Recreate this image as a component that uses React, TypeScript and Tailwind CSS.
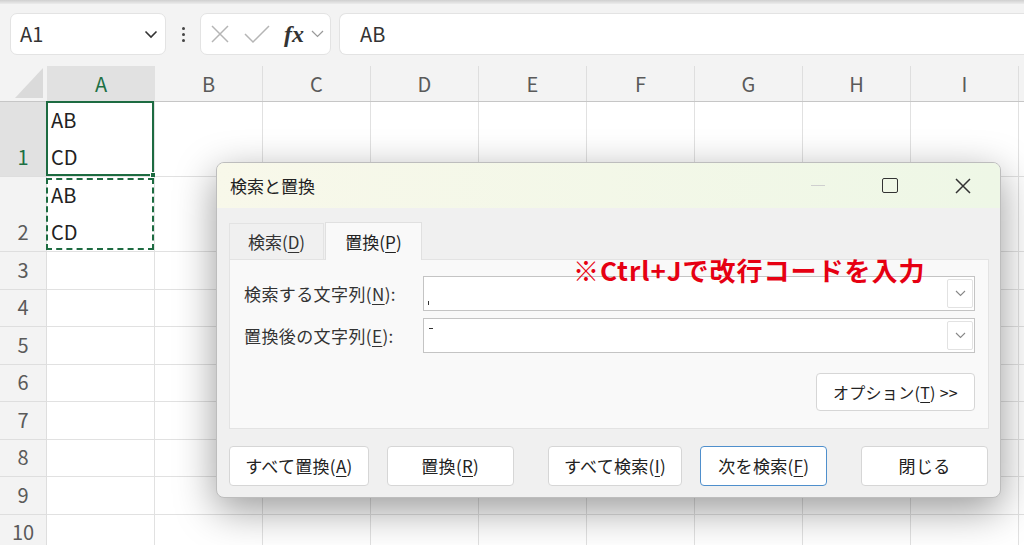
import React from "react";

const FONT = { fontFamily: '"Noto Sans CJK JP", "Noto Sans", sans-serif' };

const cols = ["A", "B", "C", "D", "E", "F", "G", "H", "I"];
const rowHeights: { label: string; h: string }[] = [
  { label: "1", h: "h-[75px]" },
  { label: "2", h: "h-[75px]" },
  { label: "3", h: "h-[37.5px]" },
  { label: "4", h: "h-[37.5px]" },
  { label: "5", h: "h-[37.5px]" },
  { label: "6", h: "h-[37.5px]" },
  { label: "7", h: "h-[37.5px]" },
  { label: "8", h: "h-[37.5px]" },
  { label: "9", h: "h-[37.5px]" },
  { label: "10", h: "h-[37.5px]" },
];

function U({ children }: { children: React.ReactNode }) {
  return <span className="underline underline-offset-[3px] decoration-[1px]">{children}</span>;
}

function Btn({ children, w, primary }: { children: React.ReactNode; w: string; primary?: boolean }) {
  return (
    <div
      className={`${w} h-[40px] flex items-center justify-center rounded-[4px] bg-white text-[17px] tracking-[0.3px] text-[#222] ${
        primary ? "border-[1.5px] border-[#4f8fcc]" : "border border-[#d6d6d6]"
      }`}
    >
      {children}
    </div>
  );
}

function ComboInput({ children }: { children?: React.ReactNode }) {
  return (
    <div className="w-[552px] h-[35px] bg-white border-[1.5px] border-[#c4c4c4] flex items-stretch">
      <div className="flex-1 relative">{children}</div>
      <div className="w-[26px] my-[2px] mr-[1px] bg-white border border-[#e2e2e2] rounded-[2px] flex items-center justify-center">
        <svg width="11" height="7" viewBox="0 0 11 7">
          <path d="M1 1l4.5 4.5L10 1" stroke="#888" strokeWidth="1.1" fill="none" />
        </svg>
      </div>
    </div>
  );
}

export default function App() {
  return (
    <div className="w-[1024px] h-[545px] overflow-hidden relative bg-[#f3f3f3]" style={FONT}>
      {/* top strip */}
      <div className="h-[4px] bg-gradient-to-b from-[#cfcfcf] to-[#ececec]" />
      {/* formula bar */}
      <div className="h-[62px] flex items-start pt-[9px] pl-[10px] gap-0">
        <div className="w-[156px] h-[42px] bg-white rounded-[7px] border border-[#e3e3e3] flex items-center pl-[9px] pr-[7px]">
          <span className="flex-1 text-[20px] text-[#333]">A1</span>
          <svg width="14" height="9" viewBox="0 0 14 9">
            <path d="M1.5 1.5l5.5 5.5 5.5-5.5" stroke="#333" strokeWidth="1.6" fill="none" />
          </svg>
        </div>
        <div className="w-[34px] h-[42px] flex flex-col items-center justify-center gap-[3px]">
          <div className="w-[3px] h-[3px] rounded-full bg-[#444]" />
          <div className="w-[3px] h-[3px] rounded-full bg-[#444]" />
          <div className="w-[3px] h-[3px] rounded-full bg-[#444]" />
        </div>
        <div className="w-[131px] h-[42px] bg-white rounded-[7px] border border-[#e3e3e3] flex items-center pl-[8px]">
          <svg width="22" height="22" viewBox="0 0 22 22">
            <path d="M3 3l16 16M19 3L3 19" stroke="#b5b5b5" strokeWidth="1.5" />
          </svg>
          <svg width="28" height="22" viewBox="0 0 28 22" className="ml-[12px]">
            <path d="M2 11l8 8L26 3" stroke="#b5b5b5" strokeWidth="1.5" fill="none" />
          </svg>
          <span
            className="ml-[13px] text-[24px] italic font-bold text-[#333] leading-none"
            style={{ fontFamily: '"Liberation Serif", "DejaVu Serif", serif' }}
          >
            fx
          </span>
          <svg width="13" height="8" viewBox="0 0 13 8" className="ml-[7px]">
            <path d="M1 1l5.5 5.5L12 1" stroke="#999" strokeWidth="1.2" fill="none" />
          </svg>
        </div>
        <div className="ml-[8px] flex-1 h-[42px] bg-white rounded-l-[7px] border border-r-0 border-[#e3e3e3] flex items-center pl-[20px] text-[20px] text-[#333]">
          AB
        </div>
      </div>

      {/* column header */}
      <div className="flex h-[36px] border-b border-[#c6c6c6]">
        <div className="w-[47px] shrink-0 relative flex items-end justify-end pb-[3px] pr-[4px]">
          <svg width="28" height="30" viewBox="0 0 28 30">
            <path d="M28 0V30H0Z" fill="#dadada" />
          </svg>
        </div>
        {cols.map((c, i) => (
          <div
            key={c}
            className={`w-[108px] shrink-0 flex items-center justify-center text-[20px] ${
              i === 0 ? "bg-[#e1e1e1] text-[#1d7044]" : "text-[#5a5a5a] border-r border-[#dedede]"
            }`}
          >
            {c}
          </div>
        ))}
        <div className="flex-1" />
      </div>

      {/* rows */}
      <div className="flex flex-col">
        {rowHeights.map((r, ri) => (
          <div key={r.label} className={`flex ${r.h}`}>
            <div
              className={`w-[47px] shrink-0 flex items-end justify-center pb-[2px] text-[20px] border-r border-[#c6c6c6] border-b border-[#dedede] leading-[34px] ${
                ri === 0 ? "bg-[#e1e1e1] text-[#1d7044]" : "bg-[#f3f3f3] text-[#5a5a5a]"
              }`}
            >
              {r.label}
            </div>
            {cols.map((c, ci) => (
              <div
                key={c}
                className="w-[108px] shrink-0 bg-white border-r border-b border-[#e1e1e1] relative"
              >
                {ci === 0 && ri < 2 && (
                  <div className="pl-[4px] -mt-[1px] text-[20px] leading-[37px] text-[#222]">
                    <div>AB</div>
                    <div>CD</div>
                  </div>
                )}
                {ci === 0 && ri === 0 && (
                  <div className="absolute -left-[1px] -top-[1px] -right-[0px] -bottom-[0px] border-2 border-[#1d6b41]">
                    <div className="absolute -right-[4px] -bottom-[4px] w-[6px] h-[6px] bg-[#1d6b41] border border-white" />
                  </div>
                )}
                {ci === 0 && ri === 1 && (
                  <div className="absolute -left-[1px] top-[1px] right-[0px] bottom-[1px] border-2 border-dashed border-[#1d6b41]" />
                )}
              </div>
            ))}
            <div className="flex-1 bg-white border-b border-[#e1e1e1]" />
          </div>
        ))}
      </div>

      {/* dialog */}
      <div className="absolute left-[216px] top-[162px] w-[785px] h-[336px] rounded-[8px] border border-[#bdbdbd] bg-[#f0f0f0] shadow-[0_12px_40px_rgba(0,0,0,0.4)] overflow-hidden flex flex-col">
        <div className="h-[45px] shrink-0 bg-gradient-to-r from-[#f8f8ea] to-[#eef7e6] flex items-center pl-[13px] pr-[20px]">
          <span className="text-[17px] text-[#222]">検索と置換</span>
          <div className="flex-1" />
          <div className="w-[14px] h-[1px] bg-[#cfcfcf] mr-[57px]" />
          <div className="w-[16px] h-[15px] border-[1.6px] border-[#333] rounded-[2px] mr-[57px]" />
          <svg width="16" height="16" viewBox="0 0 16 16" className="mr-[9px]">
            <path d="M1 1l14 14M15 1L1 15" stroke="#333" strokeWidth="1.5" />
          </svg>
        </div>
        <div className="flex-1 px-[12px] pt-[13px]">
          <div className="flex h-[38px] items-end">
            <div className="w-[95px] h-[36px] flex items-center justify-center text-[17px] text-[#333] bg-[#f0f0f0] border border-b-0 border-[#e3e3e3]">
              検索(<U>D</U>)
            </div>
            <div className="w-[97px] h-[38px] ml-[1px] flex items-center justify-center text-[17px] text-[#222] bg-[#f9f9f9] border border-b-0 border-[#e0e0e0] relative z-10 -mb-[1px]">
              置換(<U>P</U>)
            </div>
          </div>
          <div className="w-[760px] h-[170px] bg-[#f9f9f9] border border-[#e3e3e3] pl-[14px] pt-[16px] flex flex-col">
            <div className="flex items-center gap-0">
              <span className="w-[179px] text-[17px] tracking-[0.4px] text-[#333]">
                検索する文字列(<U>N</U>):
              </span>
              <ComboInput>
                <div className="absolute left-[4px] bottom-[5px] w-[1px] h-[4px] bg-[#333]" />
              </ComboInput>
            </div>
            <div className="flex items-center mt-[7px]">
              <span className="w-[179px] text-[17px] tracking-[0.4px] text-[#333]">
                置換後の文字列(<U>E</U>):
              </span>
              <ComboInput>
                <div className="absolute left-[5px] top-[9px] w-[4px] h-[1px] bg-[#333]" />
              </ComboInput>
            </div>
            <div className="flex justify-end mt-[20px] pr-[13px]">
              <div className="w-[159px] h-[38px] bg-white border border-[#d6d6d6] rounded-[4px] flex items-center justify-center text-[16px] tracking-[0.3px] text-[#222]">
                オプション(<U>T</U>) &gt;&gt;
              </div>
            </div>
          </div>
          <div className="flex mt-[17px]">
            <Btn w="w-[140px]">
              すべて置換(<U>A</U>)
            </Btn>
            <div className="w-[18px]" />
            <Btn w="w-[127px]">
              置換(<U>R</U>)
            </Btn>
            <div className="w-[34px]" />
            <Btn w="w-[135px]">
              すべて検索(<U>I</U>)
            </Btn>
            <div className="w-[18px]" />
            <Btn w="w-[127px]" primary>
              次を検索(<U>F</U>)
            </Btn>
            <div className="w-[34px]" />
            <Btn w="w-[127px]">閉じる</Btn>
          </div>
        </div>
      </div>

      {/* annotation */}
      <div className="absolute left-[573px] top-[253px] text-[26px] font-bold text-[#e60012] leading-[34px] tracking-[1px] whitespace-nowrap">
        ※Ctrl+Jで改行コードを入力
      </div>
    </div>
  );
}
